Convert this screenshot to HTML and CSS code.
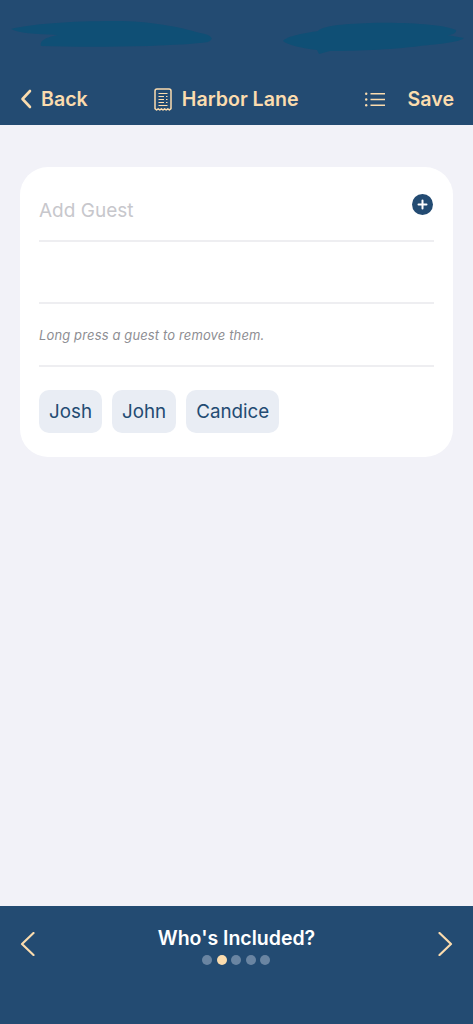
FILE: index.html
```html
<!DOCTYPE html>
<html lang="en">
<head>
<meta charset="utf-8">
<title>Harbor Lane</title>
<link rel="stylesheet" href="styles.css">
</head>
<body>
<div class="app">
  <header class="topbar">
    <svg class="scribble" viewBox="0 0 473 60" width="473" height="60" aria-hidden="true">
      <path d="M11 29 C30 24 70 21 115 21 C150 21 180 27 200 33 C212 35 215 39 208 42 C195 44 170 45 150 46 C110 47 70 47 41 46 C40 42 42 38 58 35 C35 34 18 33 11 29Z"/>
      <path d="M283 41 C287 36 305 33 318 31 C323 26 340 24 370 23 C410 22 445 25 456 30 C457 33 452 35 447 35 L464 38 C460 42 440 44 420 46 C390 50 350 51 330 51 L319 54 L317 50 C300 48 288 45 283 41Z"/>
    </svg>
    <div class="nav">
      <div class="nav-left">
        <svg class="chev-small" viewBox="0 0 12 20" width="12" height="20" aria-hidden="true"><path d="M10 2 L2.5 10 L10 18"/></svg>
        <span>Back</span>
      </div>
      <div class="nav-title">
        <svg class="receipt" viewBox="0 0 18 23" width="18" height="23" aria-hidden="true">
          <path class="outline" d="M1 20.6 V3 Q1 1 3 1 H15 Q17 1 17 3 V20.6 L15.4 22 L13.8 20.8 L12.2 22 L10.6 20.8 L9 22 L7.4 20.8 L5.8 22 L4.2 20.8 L2.6 22Z"/>
          <path class="thin" d="M4.5 5.5 H13.5 M4.5 8.5 H10 M12 8.5 H13.5 M4.5 11.5 H10 M12 11.5 H13.5 M4.5 14.5 H10 M12 14.5 H13.5 M4.5 17.5 H13.5"/>
        </svg>
        <span>Harbor Lane</span>
      </div>
      <div class="nav-right">
        <svg class="list" viewBox="0 0 20 15" width="20" height="15" aria-hidden="true">
          <circle cx="1.2" cy="1.8" r="1.2"/><circle cx="1.2" cy="7.5" r="1.2"/><circle cx="1.2" cy="13.2" r="1.2"/>
          <path d="M5.5 1.8 H20 M5.5 7.5 H20 M5.5 13.2 H20"/>
        </svg>
        <span>Save</span>
      </div>
    </div>
  </header>

  <main class="content">
    <section class="card">
      <div class="row row-input">
        <span class="placeholder">Add Guest</span>
        <svg class="add" viewBox="0 0 21 21" width="21" height="21" aria-hidden="true">
          <circle cx="10.5" cy="10.5" r="10.5"/>
          <path d="M10.5 6.5 V14.5 M6.5 10.5 H14.5"/>
        </svg>
      </div>
      <div class="row row-empty"></div>
      <div class="row row-hint"><em>Long press a guest to remove them.</em></div>
      <div class="chips">
        <span class="chip">Josh</span>
        <span class="chip">John</span>
        <span class="chip">Candice</span>
      </div>
    </section>
  </main>

  <footer class="bottombar">
    <svg class="chev-large" viewBox="0 0 15 24" width="15" height="24" aria-hidden="true"><path d="M13.5 1 L2 12 L13.5 23"/></svg>
    <div class="step">
      <div class="step-title">Who's Included?</div>
      <div class="dots">
        <span class="dot"></span><span class="dot active"></span><span class="dot"></span><span class="dot"></span><span class="dot"></span>
      </div>
    </div>
    <svg class="chev-large" viewBox="0 0 15 24" width="15" height="24" aria-hidden="true"><path d="M1.5 1 L13 12 L1.5 23"/></svg>
  </footer>
</div>
</body>
</html>
```
FILE: styles.css
```css
* { box-sizing: border-box; }
html, body { margin: 0; padding: 0; }
body {
  font-family: Inter, "Liberation Sans", sans-serif;
  background: #f2f2f8;
}
.app {
  width: 473px;
  height: 1024px;
  display: flex;
  flex-direction: column;
  overflow: hidden;
}
.topbar {
  position: relative;
  height: 125px;
  flex: none;
  background: #234b72;
  display: flex;
  flex-direction: column;
  justify-content: flex-end;
  padding: 0 19px 12px 20px;
}
.scribble {
  position: absolute;
  left: 0;
  top: 0;
  filter: blur(0.6px);
}
.scribble path { fill: #0f4f75; }
.nav {
  display: flex;
  align-items: center;
  justify-content: space-between;
  height: 28px;
  color: #fbdcae;
  font-size: 19.6px;
  font-weight: 600;
}
.nav-left, .nav-title, .nav-right { display: flex; align-items: center; }
.nav-left { gap: 9px; }
.nav-title { gap: 10px; }
.nav-right { gap: 23px; }
.chev-small path, .chev-large path {
  fill: none;
  stroke: #fbdcae;
  stroke-linecap: round;
  stroke-linejoin: round;
}
.chev-small path { stroke-width: 2.6; }
.chev-large path { stroke-width: 2.2; }
.receipt path { fill: none; stroke: #fbdcae; }
.receipt .outline { stroke-width: 1.5; stroke-linejoin: round; }
.receipt .thin { stroke-width: 1.2; }
.list circle { fill: #fbdcae; }
.list path { fill: none; stroke: #fbdcae; stroke-width: 1.6; }
.content {
  flex: 1;
  padding: 42px 20px 0;
}
.card {
  background: #fff;
  border-radius: 28px;
  height: 290px;
  padding: 12px 19px 0;
}
.row {
  height: 62.5px;
  border-bottom: 2px solid #eeeef1;
}
.row-input {
  position: relative;
  display: flex;
  align-items: center;
  justify-content: space-between;
  color: #c7c7cc;
  font-size: 19px;
  padding-top: 2px;
}
.add {
  position: absolute;
  right: 1px;
  top: 14.5px;
}
.add circle { fill: #234b72; }
.add path { fill: none; stroke: #fff; stroke-width: 2; stroke-linecap: round; }
.row-hint {
  display: flex;
  align-items: center;
  font-size: 13px;
  letter-spacing: 0.13px;
  color: #8e8e93;
  padding-top: 1px;
}
.chips {
  display: flex;
  gap: 10px;
  margin-top: 23px;
}
.chip {
  height: 43px;
  padding: 1px 10px 0;
  border-radius: 10px;
  background: #e9edf4;
  color: #234b72;
  font-size: 18.8px;
  display: flex;
  align-items: center;
}
.bottombar {
  height: 118px;
  flex: none;
  background: #234b72;
  display: flex;
  align-items: flex-start;
  justify-content: space-between;
  padding: 26px 20px 0;
}
.step {
  display: flex;
  flex-direction: column;
  align-items: center;
  margin-top: -8.5px;
}
.step-title {
  color: #fff;
  font-size: 19.5px;
  font-weight: 600;
  line-height: 28px;
}
.dots { display: flex; gap: 4.5px; margin-top: 3px; }
.dot {
  width: 10px;
  height: 10px;
  border-radius: 50%;
  background: #6a85a2;
}
.dot.active { background: #fbdcae; }
```
